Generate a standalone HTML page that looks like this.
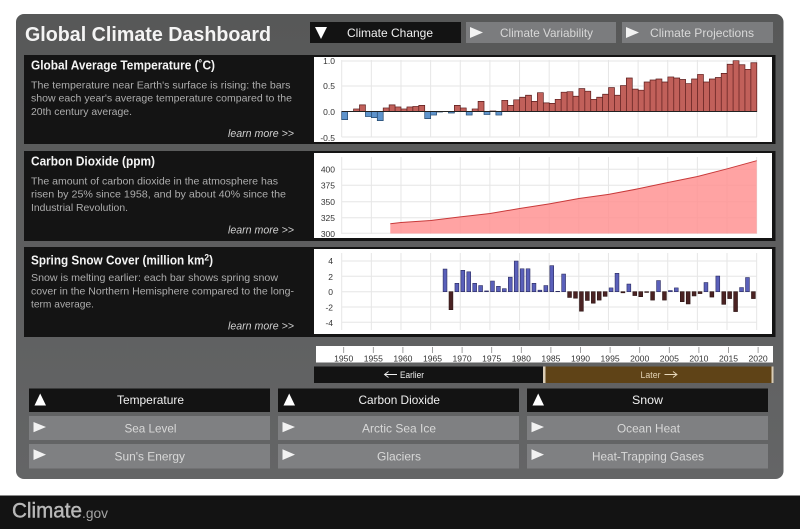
<!DOCTYPE html>
<html><head><meta charset="utf-8"><title>Global Climate Dashboard</title>
<style>
html,body{margin:0;padding:0;background:#fff;width:800px;height:529px;overflow:hidden}
svg{display:block;filter:blur(.35px)}
text{font-family:"Liberation Sans",sans-serif}
.b{font-size:10.5px;fill:#adadad}
.h{font-size:12.5px;font-weight:bold;fill:#f4f4f4}
.l{font-size:11px;font-style:italic;fill:#cfcfcf}
.a{font-size:8.5px;fill:#333;text-anchor:end}
.t{font-size:8.6px;fill:#333;text-anchor:middle}
.w{font-size:12px;fill:#f0f0f0}
.g{font-size:12px;fill:#d8d8d8}
</style></head><body>
<svg width="800" height="529" viewBox="0 0 800 529" xmlns="http://www.w3.org/2000/svg">
<defs><linearGradient id="p" x1="0" y1="0" x2="0" y2="1"><stop offset="0" stop-color="#575858"/><stop offset="1" stop-color="#646566"/></linearGradient></defs>
<rect width="800" height="529" fill="#fff"/>
<rect x="16" y="14" width="767.5" height="465" rx="8" fill="url(#p)"/>
<text x="25" y="41" font-size="20.5" font-weight="bold" fill="#f4f4f4" textLength="246" lengthAdjust="spacingAndGlyphs">Global Climate Dashboard</text>

<rect x="310" y="22" width="151" height="21" fill="#131313"/>
<rect x="466" y="22" width="150" height="21" fill="#7b7c7e"/>
<rect x="622" y="22" width="151" height="21" fill="#7b7c7e"/>
<path d="M315 27H327L321 39z" fill="#fff"/>
<path d="M470 27L483 32.5L470 38zM626 27L639 32.5L626 38z" fill="#f2f2f2"/>
<text x="347" y="37" class="w" textLength="86" lengthAdjust="spacingAndGlyphs">Climate Change</text>
<text x="500" y="37" class="g" textLength="93" lengthAdjust="spacingAndGlyphs">Climate Variability</text>
<text x="650" y="37" class="g" textLength="104" lengthAdjust="spacingAndGlyphs">Climate Projections</text>

<rect x="24" y="55" width="751.5" height="89" fill="#141414"/>
<rect x="24" y="151" width="751.5" height="90" fill="#141414"/>
<rect x="24" y="247" width="751.5" height="90" fill="#141414"/>
<rect x="314" y="57" width="458" height="85" fill="#fff"/>
<rect x="314" y="153" width="458" height="85" fill="#fff"/>
<rect x="314" y="249" width="458" height="85" fill="#fff"/>

<text x="31" y="69.5" class="h" textLength="184" lengthAdjust="spacingAndGlyphs">Global Average Temperature (˚C)</text>
<text x="31" y="88.3" class="b" textLength="259.5" lengthAdjust="spacingAndGlyphs">The temperature near Earth's surface is rising: the bars</text>
<text x="31" y="101.7" class="b" textLength="261" lengthAdjust="spacingAndGlyphs">show each year's average temperature compared to the</text>
<text x="31" y="115" class="b" textLength="101" lengthAdjust="spacingAndGlyphs">20th century average.</text>
<text x="228" y="137" class="l" textLength="66" lengthAdjust="spacingAndGlyphs">learn more &gt;&gt;</text>

<text x="31" y="165.7" class="h" textLength="124" lengthAdjust="spacingAndGlyphs">Carbon Dioxide (ppm)</text>
<text x="31" y="184.3" class="b" textLength="247" lengthAdjust="spacingAndGlyphs">The amount of carbon dioxide in the atmosphere has</text>
<text x="31" y="197.7" class="b" textLength="255" lengthAdjust="spacingAndGlyphs">risen by 25% since 1958, and by about 40% since the</text>
<text x="31" y="211" class="b" textLength="97" lengthAdjust="spacingAndGlyphs">Industrial Revolution.</text>
<text x="228" y="233.5" class="l" textLength="66" lengthAdjust="spacingAndGlyphs">learn more &gt;&gt;</text>

<text x="31" y="264.3" class="h" textLength="182" lengthAdjust="spacingAndGlyphs">Spring Snow Cover (million km<tspan font-size="9" dy="-4">2</tspan><tspan dy="4">)</tspan></text>
<text x="31" y="281" class="b" textLength="247" lengthAdjust="spacingAndGlyphs">Snow is melting earlier: each bar shows spring snow</text>
<text x="31" y="294.3" class="b" textLength="263" lengthAdjust="spacingAndGlyphs">cover in the Northern Hemisphere compared to the long-</text>
<text x="31" y="307.7" class="b" textLength="63" lengthAdjust="spacingAndGlyphs">term average.</text>
<text x="228" y="329.5" class="l" textLength="66" lengthAdjust="spacingAndGlyphs">learn more &gt;&gt;</text>

<!-- Temperature chart -->
<g fill="none" stroke="#e6e6e6" stroke-width="1">
<path d="M341.7 61H757M341.7 86H757M341.7 111.5H757M341.7 137H757"/>
<path d="M341.7 60v77m29.64-77v77m29.64-77v77m29.64-77v77m29.64-77v77m29.64-77v77m29.64-77v77m29.64-77v77m29.64-77v77m29.64-77v77m29.64-77v77m29.64-77v77m29.64-77v77m29.64-77v77m29.64-77v77"/>
</g>
<g transform="translate(341.7,111.5) scale(5.93,-50.8)" stroke-width=".7">
<path fill="#5f94cc" stroke="#24486e" vector-effect="non-scaling-stroke" d="M0 0v-.16h1v.16zM4 0v-.1h1v.1zM5 0v-.12h1v.12zM6 0v-.18h1v.18zM14 0v-.14h1v.14zM15 0v-.07h1v.07zM16 0v-.01h1v.01zM18 0v-.03h1v.03zM21 0v-.07h1v.07zM24 0v-.06h1v.06zM26 0v-.07h1v.07z"/>
<path fill="#c1605a" stroke="#5a1c1c" vector-effect="non-scaling-stroke" d="M2 0v.05h1v-.05zM3 0v.13h1v-.13zM7 0v.07h1v-.07zM8 0v.13h1v-.13zM9 0v.09h1v-.09zM10 0v.05h1v-.05zM11 0v.09h1v-.09zM12 0v.1h1v-.1zM13 0v.12h1v-.12zM19 0v.12h1v-.12zM20 0v.07h1v-.07zM22 0v.05h1v-.05zM23 0v.2h1v-.2zM25 0v.01h1v-.01zM27 0v.22h1v-.22zM28 0v.12h1v-.12zM29 0v.23h1v-.23zM30 0v.28h1v-.28zM31 0v.32h1v-.32zM32 0v.2h1v-.2zM33 0v.37h1v-.37zM34 0v.17h1v-.17zM35 0v.16h1v-.16zM36 0v.24h1v-.24zM37 0v.38h1v-.38zM38 0v.39h1v-.39zM39 0v.3h1v-.3zM40 0v.45h1v-.45zM41 0v.4h1v-.4zM42 0v.24h1v-.24zM43 0v.28h1v-.28zM44 0v.34h1v-.34zM45 0v.47h1v-.47zM46 0v.32h1v-.32zM47 0v.51h1v-.51zM48 0v.66h1v-.66zM49 0v.44h1v-.44zM50 0v.42h1v-.42zM51 0v.58h1v-.58zM52 0v.62h1v-.62zM53 0v.64h1v-.64zM54 0v.58h1v-.58zM55 0v.68h1v-.68zM56 0v.66h1v-.66zM57 0v.63h1v-.63zM58 0v.55h1v-.55zM59 0v.64h1v-.64zM60 0v.73h1v-.73zM61 0v.58h1v-.58zM62 0v.64h1v-.64zM63 0v.67h1v-.67zM64 0v.75h1v-.75zM65 0v.93h1v-.93zM66 0v1h1v-1zM67 0v.92h1v-.92zM68 0v.83h1v-.83zM69 0v.96h1v-.96z"/>
</g>
<path d="M341.7 111.5H757" stroke="#222" stroke-width="1" fill="none"/>
<text x="335" y="64" class="a">1.0</text>
<text x="335" y="89" class="a">0.5</text>
<text x="335" y="115" class="a">0.0</text>
<text x="335" y="141" class="a">-0.5</text>

<!-- CO2 chart -->
<g fill="none" stroke="#e6e6e6" stroke-width="1">
<path d="M341.7 169.3H757M341.7 185.3H757M341.7 201.7H757M341.7 217.7H757M341.7 233.3H757"/>
<path d="M341.7 157v77m29.64-77v77m29.64-77v77m29.64-77v77m29.64-77v77m29.64-77v77m29.64-77v77m29.64-77v77m29.64-77v77m29.64-77v77m29.64-77v77m29.64-77v77m29.64-77v77m29.64-77v77m29.64-77v77"/>
</g>
<path fill="#ff8f8f" fill-opacity=".82" d="M390.3 223.7L401 222.5L430.7 220.5L460.3 216.9L490 213.5L519.6 208.5L549.3 203.9L578.9 198.5L608.6 194.4L638.2 188.8L667.9 182.5L697.5 176.5L727.2 168.8L756.7 160.7V233.5H390.3z"/>
<path fill="none" stroke="#c83a3a" stroke-width="1" d="M390.3 223.7L401 222.5L430.7 220.5L460.3 216.9L490 213.5L519.6 208.5L549.3 203.9L578.9 198.5L608.6 194.4L638.2 188.8L667.9 182.5L697.5 176.5L727.2 168.8L756.7 160.7"/>
<text x="335" y="172.5" class="a">400</text>
<text x="335" y="188.5" class="a">375</text>
<text x="335" y="205" class="a">350</text>
<text x="335" y="221" class="a">325</text>
<text x="335" y="237" class="a">300</text>

<!-- Snow chart -->
<g fill="none" stroke="#e6e6e6" stroke-width="1">
<path d="M341.7 261H757M341.7 276.3H757M341.7 291.7H757M341.7 307H757M341.7 322.3H757"/>
<path d="M341.7 253v77m29.64-77v77m29.64-77v77m29.64-77v77m29.64-77v77m29.64-77v77m29.64-77v77m29.64-77v77m29.64-77v77m29.64-77v77m29.64-77v77m29.64-77v77m29.64-77v77m29.64-77v77m29.64-77v77"/>
</g>
<g transform="translate(341.7,291.7) scale(5.93,-7.65)" stroke-width=".6">
<path fill="#5a60ba" stroke="#2c2c60" vector-effect="non-scaling-stroke" d="M17.1 0v2.96h.65v-2.96zM19.1 0v1.1h.65v-1.1zM20.1 0v2.8h.65v-2.8zM21.1 0v2.6h.65v-2.6zM22.1 0v1.1h.65v-1.1zM23.1 0v.8h.65v-.8zM24.1 0v.1h.65v-.1zM25.1 0v1.4h.65v-1.4zM26.1 0v.7h.65v-.7zM27.1 0v.4h.65v-.4zM28.1 0v1.9h.65v-1.9zM29.1 0v4h.65v-4zM30.1 0v3h.65v-3zM31.1 0v3h.65v-3zM32.1 0v1.1h.65v-1.1zM33.1 0v.2h.65v-.2zM34.1 0v.8h.65v-.8zM35.1 0v3.4h.65v-3.4zM36.1 0v.05h.65v-.05zM37.1 0v2.3h.65v-2.3zM45.1 0v.5h.65v-.5zM46.1 0v2.4h.65v-2.4zM48.1 0v1h.65v-1zM53.1 0v1.45h.65v-1.45zM55.1 0v.15h.65v-.15zM56.1 0v.5h.65v-.5zM61.1 0v1.2h.65v-1.2zM63.1 0v2.05h.65v-2.05zM67.1 0v.55h.65v-.55zM68.1 0v1.85h.65v-1.85z"/>
<path fill="#4a2222" stroke="#2c1414" vector-effect="non-scaling-stroke" d="M18.1 0v-2.35h.65v2.35zM38.1 0v-.75h.65v.75zM39.1 0v-.85h.65v.85zM40.1 0v-2.55h.65v2.55zM41.1 0v-1.15h.65v1.15zM42.1 0v-1.5h.65v1.5zM43.1 0v-1.1h.65v1.1zM44.1 0v-.6h.65v.6zM47.1 0v-.15h.65v.15zM49.1 0v-.5h.65v.5zM50.1 0v-.65h.65v.65zM51.1 0v-.1h.65v.1zM52.1 0v-1.1h.65v1.1zM54.1 0v-1.1h.65v1.1zM57.1 0v-1.3h.65v1.3zM58.1 0v-1.6h.65v1.6zM59.1 0v-.55h.65v.55zM60.1 0v-.25h.65v.25zM62.1 0v-.7h.65v.7zM64.1 0v-1.65h.65v1.65zM65.1 0v-.9h.65v.9zM66.1 0v-2.6h.65v2.6zM69.1 0v-.9h.65v.9z"/>
</g>
<text x="333" y="264" class="a">4</text>
<text x="333" y="280" class="a">2</text>
<text x="333" y="295" class="a">0</text>
<text x="333" y="310.5" class="a">-2</text>
<text x="333" y="326" class="a">-4</text>

<!-- Timeline -->
<rect x="316" y="346" width="457" height="16.5" fill="#fff"/>
<path stroke="#888" stroke-width=".8" fill="none" d="M343.7 347v6m29.6-6v6m29.6-6v6m29.6-6v6m29.6-6v6m29.6-6v6m29.6-6v6m29.6-6v6m29.6-6v6m29.6-6v6m29.6-6v6m29.6-6v6m29.6-6v6m29.6-6v6m29.6-6v6"/>
<text x="343.7" y="361.5" class="t">1950</text><text x="373.3" y="361.5" class="t">1955</text><text x="402.9" y="361.5" class="t">1960</text><text x="432.5" y="361.5" class="t">1965</text><text x="462.1" y="361.5" class="t">1970</text><text x="491.7" y="361.5" class="t">1975</text><text x="521.3" y="361.5" class="t">1980</text><text x="550.9" y="361.5" class="t">1985</text><text x="580.5" y="361.5" class="t">1990</text><text x="610.1" y="361.5" class="t">1995</text><text x="639.7" y="361.5" class="t">2000</text><text x="669.3" y="361.5" class="t">2005</text><text x="698.9" y="361.5" class="t">2010</text><text x="728.5" y="361.5" class="t">2015</text><text x="758.1" y="361.5" class="t">2020</text>
<rect x="314" y="366.5" width="229" height="16.5" fill="#131313"/>
<rect x="543" y="366.5" width="229" height="16.5" fill="#5f4317"/>
<rect x="543" y="366.5" width="2.5" height="16.5" fill="#d9ccb6"/>
<rect x="771.5" y="366.5" width="2" height="16.5" fill="#d9ccb6"/>
<path d="M397 374.5H384.500M388.500 371.5L384.500 374.5L388.500 377.5" stroke="#f0f0f0" fill="none" stroke-width=".9"/>
<text x="400" y="377.8" font-size="9" fill="#eee" textLength="24" lengthAdjust="spacingAndGlyphs">Earlier</text>
<text x="640.5" y="377.8" font-size="9" fill="#e2d2b4" textLength="20" lengthAdjust="spacingAndGlyphs">Later</text>
<path d="M664.5 374.5H677M673 371.5L677 374.5L673 377.5" stroke="#e8d9bc" fill="none" stroke-width=".9"/>

<!-- Buttons -->
<g fill="#131313">
<rect x="29" y="388.5" width="241" height="23.5"/>
<rect x="278" y="388.5" width="241" height="23.5"/>
<rect x="527" y="388.5" width="241" height="23.5"/>
</g>
<g fill="#7f8082">
<rect x="29" y="416" width="241" height="24"/>
<rect x="278" y="416" width="241" height="24"/>
<rect x="527" y="416" width="241" height="24"/>
<rect x="29" y="444" width="241" height="24.5"/>
<rect x="278" y="444" width="241" height="24.5"/>
<rect x="527" y="444" width="241" height="24.5"/>
</g>
<path fill="#fff" d="M34.5 405.5L40.2 393.5L46 405.5zM283.5 405.5L289.2 393.5L295 405.5zM532.5 405.5L538.2 393.5L544 405.5z"/>
<path fill="#f2f2f2" d="M33.5 422L46 427L33.5 432.3zM282.5 422L295 427L282.5 432.3zM531.5 422L544 427L531.5 432.3zM33.5 449.3L46 454.6L33.5 460zM282.5 449.3L295 454.6L282.5 460zM531.5 449.3L544 454.6L531.5 460z"/>
<text x="117" y="404" class="w" textLength="67" lengthAdjust="spacingAndGlyphs">Temperature</text>
<text x="358.5" y="404" class="w" textLength="81.5" lengthAdjust="spacingAndGlyphs">Carbon Dioxide</text>
<text x="632" y="404" class="w" textLength="31" lengthAdjust="spacingAndGlyphs">Snow</text>
<text x="124.5" y="432.5" class="g" textLength="52" lengthAdjust="spacingAndGlyphs">Sea Level</text>
<text x="362" y="432.5" class="g" textLength="74" lengthAdjust="spacingAndGlyphs">Arctic Sea Ice</text>
<text x="617" y="432.5" class="g" textLength="63" lengthAdjust="spacingAndGlyphs">Ocean Heat</text>
<text x="114.5" y="460.5" class="g" textLength="70.5" lengthAdjust="spacingAndGlyphs">Sun's Energy</text>
<text x="377" y="460.5" class="g" textLength="44" lengthAdjust="spacingAndGlyphs">Glaciers</text>
<text x="592" y="460.5" class="g" textLength="112" lengthAdjust="spacingAndGlyphs">Heat-Trapping Gases</text>

<!-- Footer -->
<rect x="0" y="495.5" width="800" height="33.5" fill="#131313"/>
<text x="12" y="517.5" font-size="21" fill="#b8b8b8" stroke="#b8b8b8" stroke-width=".4" textLength="70" lengthAdjust="spacingAndGlyphs">Climate</text>
<text x="82" y="518" font-size="14" fill="#a4a4a4" textLength="26" lengthAdjust="spacingAndGlyphs">.gov</text>
</svg>
</body></html>
